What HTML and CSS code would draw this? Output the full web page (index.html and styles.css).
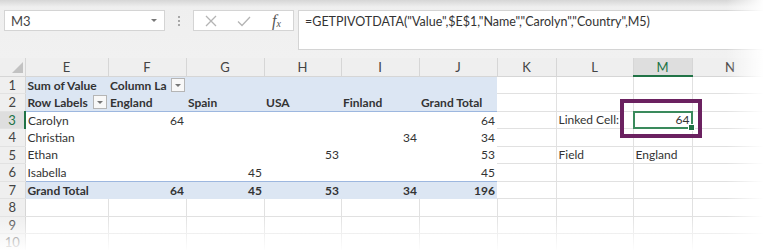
FILE: index.html
```html
<!DOCTYPE html>
<html lang="en">
<head>
  <meta charset="UTF-8">
  <meta name="viewport" content="width=device-width, initial-scale=1.0">
  <title>GETPIVOTDATA</title>
  <link rel="stylesheet" href="styles.css">
</head>
<body>
  <div class="window">
    <!-- Строка формул -->
    <div class="formula-row">
      <div class="name-box">M3<span class="caret"></span></div>
      <div class="grip"><i></i><i></i><i></i></div>
      <div class="fx-buttons">
        <svg width="14" height="14" viewBox="0 0 14 14"><path d="M2 2L12 12M12 2L2 12" stroke="#b4b4b4" stroke-width="1.3" fill="none"/></svg>
        <svg width="16" height="14" viewBox="0 0 16 14"><path d="M2 7.5L6 11.5L14 3" stroke="#b4b4b4" stroke-width="1.3" fill="none"/></svg>
        <span class="fx">f<sub>x</sub></span>
      </div>
      <div class="formula">=GETPIVOTDATA("Value",$E$1,"Name","Carolyn","Country",M5)</div>
    </div>

    <!-- Лист -->
    <table class="sheet">
      <colgroup>
        <col style="width:25px"><col style="width:83px"><col style="width:78px"><col style="width:78px">
        <col style="width:77px"><col style="width:78px"><col style="width:78px"><col style="width:59px">
        <col style="width:77px"><col style="width:59px"><col style="width:76px">
      </colgroup>
      <tr class="col-heads">
        <th class="corner"><span></span></th>
        <th>E</th><th>F</th><th>G</th><th>H</th><th>I</th><th>J</th><th>K</th><th>L</th><th class="active">M</th><th>N</th>
      </tr>
      <tr>
        <th class="rh">1</th>
        <td class="pv b">Sum of Value</td>
        <td class="pv b"><div class="with-dd"><span>Column La</span><i class="dd"></i></div></td>
        <td class="pv"></td><td class="pv"></td><td class="pv"></td><td class="pv"></td>
        <td></td><td></td><td></td><td></td>
      </tr>
      <tr class="pv-line">
        <th class="rh">2</th>
        <td class="pv b"><div class="with-dd"><span>Row Labels</span><i class="dd"></i></div></td>
        <td class="pv b">England</td>
        <td class="pv b">Spain</td>
        <td class="pv b">USA</td>
        <td class="pv b">Finland</td>
        <td class="pv b">Grand Total</td>
        <td></td><td></td><td></td><td></td>
      </tr>
      <tr>
        <th class="rh active">3</th>
        <td class="pb">Carolyn</td>
        <td class="pb num">64</td>
        <td class="pb"></td><td class="pb"></td><td class="pb"></td>
        <td class="pb num">64</td>
        <td></td>
        <td>Linked Cell:</td>
        <td class="num current">64<span class="sel"><i></i></span><span class="mark"></span></td>
        <td></td>
      </tr>
      <tr>
        <th class="rh">4</th>
        <td class="pb">Christian</td>
        <td class="pb"></td><td class="pb"></td><td class="pb"></td>
        <td class="pb num">34</td>
        <td class="pb num">34</td>
        <td></td><td></td><td></td><td></td>
      </tr>
      <tr>
        <th class="rh">5</th>
        <td class="pb">Ethan</td>
        <td class="pb"></td><td class="pb"></td>
        <td class="pb num">53</td>
        <td class="pb"></td>
        <td class="pb num">53</td>
        <td></td>
        <td>Field</td>
        <td>England</td>
        <td></td>
      </tr>
      <tr>
        <th class="rh">6</th>
        <td class="pb">Isabella</td>
        <td class="pb"></td>
        <td class="pb num">45</td>
        <td class="pb"></td><td class="pb"></td>
        <td class="pb num">45</td>
        <td></td><td></td><td></td><td></td>
      </tr>
      <tr class="total">
        <th class="rh">7</th>
        <td class="pv b">Grand Total</td>
        <td class="pv b num">64</td>
        <td class="pv b num">45</td>
        <td class="pv b num">53</td>
        <td class="pv b num">34</td>
        <td class="pv b num">196</td>
        <td></td><td></td><td></td><td></td>
      </tr>
      <tr>
        <th class="rh">8</th>
        <td></td><td></td><td></td><td></td><td></td><td></td><td></td><td></td><td></td><td></td>
      </tr>
      <tr>
        <th class="rh">9</th>
        <td></td><td></td><td></td><td></td><td></td><td></td><td></td><td></td><td></td><td></td>
      </tr>
      <tr>
        <th class="rh">10</th>
        <td></td><td></td><td></td><td></td><td></td><td></td><td></td><td></td><td></td><td></td>
      </tr>
    </table>

    <!-- Затухание краёв скриншота -->
    <div class="fade-right"></div>
    <div class="fade-bottom"></div>
  </div>
</body>
</html>
```

FILE: styles.css
```css
/* Общие стили */
body {
  margin: 0;
  background-color: #fff;
  font-family: Lato, 'Liberation Sans', sans-serif;
  color: #333;
}

.window {
  position: relative;
  width: 768px;
  height: 250px;
  overflow: hidden;
}

/* Строка формул */
.formula-row {
  display: flex;
  align-items: flex-start;
  height: 58px;
  box-sizing: border-box;
  padding: 10px 0 0 4px;
  background: linear-gradient(#d6d6d6, #efefef 7px, #f1f1f1);
}

.name-box {
  display: flex;
  align-items: center;
  width: 161px;
  height: 21px;
  box-sizing: border-box;
  padding-left: 6px;
  background-color: #fff;
  border: 1px solid #d4d4d4;
  font-size: 13px;
  color: #444;
}

.caret {
  margin-left: auto;
  margin-right: 7px;
  border-left: 3px solid transparent;
  border-right: 3px solid transparent;
  border-top: 3px solid #777;
}

.grip {
  display: flex;
  flex-direction: column;
  align-items: center;
  justify-content: center;
  gap: 2px;
  width: 28px;
  height: 21px;
}

.grip i {
  width: 2px;
  height: 2px;
  background-color: #a8a8a8;
}

.fx-buttons {
  display: grid;
  grid-template-columns: repeat(3, 33px);
  place-items: center;
  height: 19px;
  background-color: #fff;
  border: 1px solid #d4d4d4;
}

.fx {
  font-family: 'Liberation Serif', serif;
  font-style: italic;
  font-size: 16px;
  color: #555;
  line-height: 1;
}

.fx sub {
  font-size: 10px;
  vertical-align: -1px;
}

.formula {
  flex: 1;
  height: 40px;
  margin-left: 4px;
  box-sizing: border-box;
  padding: 3px 8px 3px 6px;
  background-color: #fff;
  border: 1px solid #d4d4d4;
  border-right: none;
  font-size: 12.5px;
  color: #333;
}

/* Лист */
.sheet {
  width: 768px;
  table-layout: fixed;
  border-collapse: collapse;
  font-size: 12px;
}

.sheet tr {
  height: 17.5px;
}

.sheet .col-heads {
  height: 18px;
}

.col-heads th {
  padding: 0;
  background-color: #efefef;
  border-right: 1px solid #d6d6d6;
  border-bottom: 1px solid #d6d6d6;
  font-size: 13px;
  font-weight: normal;
  color: #444;
}

.col-heads th.active {
  background-color: #dedede;
  color: #217346;
  border-bottom: 2px solid #217346;
}

.corner {
  position: relative;
}

.corner span {
  position: absolute;
  right: 2px;
  bottom: 3px;
  border-left: 11px solid transparent;
  border-bottom: 11px solid #c2c2c2;
}

.rh {
  padding: 0;
  background-color: #efefef;
  border-right: 1px solid #d6d6d6;
  border-bottom: 1px solid #e2e2e2;
  font-size: 13px;
  font-weight: normal;
  color: #444;
}

.rh.active {
  background-color: #dedede;
  color: #217346;
  border-right: 2px solid #217346;
}

td {
  padding: 0 2px;
  border-right: 1px solid #e1e1e1;
  border-bottom: 1px solid #e1e1e1;
  white-space: nowrap;
  overflow: hidden;
}

.num {
  text-align: right;
}

.b {
  font-weight: 700;
}

/* Сводная таблица */
.pv {
  background-color: #dce6f3;
  border-right: none;
  border-bottom: none;
}

.pb {
  border-right: none;
  border-bottom: none;
}

.pv-line td.pv {
  border-bottom: 1px solid #9db7df;
}

.total td.pv {
  border-top: 1px solid #9db7df;
}

.with-dd {
  display: flex;
  align-items: center;
}

.with-dd span {
  flex: 1;
}

.dd {
  position: relative;
  flex: none;
  width: 12px;
  height: 12px;
  margin-right: -1px;
  margin-left: 3px;
  background-color: #f8f8f8;
  border: 1px solid #b5b5b5;
}

.dd::after {
  content: "";
  position: absolute;
  left: 3px;
  top: 5px;
  border-left: 3px solid transparent;
  border-right: 3px solid transparent;
  border-top: 3px solid #777;
}

/* Выделенная ячейка M3 */
.current {
  position: relative;
  overflow: visible;
}

.sel {
  position: absolute;
  left: -1px;
  right: -1px;
  top: -1px;
  bottom: -1px;
  border: 2px solid #3a8a5c;
}

.sel i {
  position: absolute;
  right: -4px;
  bottom: -4px;
  width: 5px;
  height: 5px;
  background-color: #217346;
  border: 1px solid #fff;
}

.mark {
  position: absolute;
  left: -14px;
  right: -10px;
  top: -13px;
  bottom: -10px;
  border: 4.5px solid #6b2160;
}

/* Затухание краёв */
.fade-right {
  position: absolute;
  top: 0;
  right: 0;
  bottom: 0;
  width: 42px;
  background: linear-gradient(to right, rgba(255, 255, 255, 0), #fff 90%);
}

.fade-bottom {
  position: absolute;
  left: 0;
  right: 0;
  bottom: 0;
  height: 34px;
  background: linear-gradient(rgba(255, 255, 255, 0), rgba(255, 255, 255, 0.95));
}
```
